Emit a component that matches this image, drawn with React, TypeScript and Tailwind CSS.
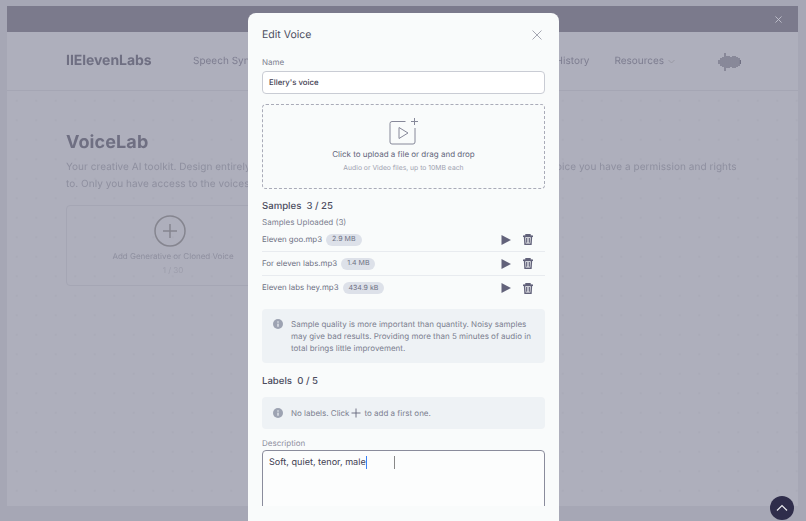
import React from "react";

function Info() {
  return (
    <svg width="10" height="10" viewBox="0 0 20 20" className="shrink-0">
      <circle cx="10" cy="10" r="10" fill="#9da3b2" />
      <rect x="8.8" y="9" width="2.4" height="6.5" rx="1" fill="#eef2f5" />
      <circle cx="10" cy="6" r="1.5" fill="#eef2f5" />
    </svg>
  );
}

function Play() {
  return (
    <svg width="10" height="10" viewBox="0 0 10 10">
      <path d="M.5 0 L10 5 L.5 10 Z" fill="#62627a" />
    </svg>
  );
}

function Trash() {
  return (
    <svg width="10" height="11" viewBox="0 0 20 22" fill="none" stroke="#62627a">
      <path d="M0 4.5 H20 M6 4 V1.5 H14 V4" strokeWidth="2.8" />
      <path d="M3 5 L4 20.5 H16 L17 5 Z" strokeWidth="2.8" />
      <path d="M7.5 8 V17.5 M12.5 8 V17.5" strokeWidth="2.6" />
    </svg>
  );
}

function SampleRow({ name, size, border }: { name: string; size: string; border?: boolean }) {
  return (
    <div className={`flex h-6 items-center ${border ? "border-b border-[#e8ebef]" : ""}`}>
      <span className="text-[7.9px] text-[#6d7083]">{name}</span>
      <span className="ml-[4px] flex h-[12px] items-center rounded-full bg-[#dde1e9] px-[6px] text-[7px] text-[#6d7083]">
        {size}
      </span>
      <span className="ml-auto flex items-center gap-[12px] pr-[12px]">
        <Play />
        <Trash />
      </span>
    </div>
  );
}

export default function App() {
  return (
    <div className="relative h-[521px] w-[806px] overflow-hidden bg-[#a6a7b5] font-['Inter',sans-serif] [text-rendering:geometricPrecision]">
      {/* page behind the dialog */}
      <div className="ml-[7px] mt-[6px] flex h-[500px] w-[791px] flex-col bg-[#aeafbc] blur-[0.35px]">
        <div className="flex h-[26px] items-center justify-end bg-[#7b7a8c] pr-[16px]">
          <svg width="7" height="7" viewBox="0 0 8 8" stroke="#c3c3cf" strokeWidth="1">
            <path d="M.5 .5 L7.5 7.5 M7.5 .5 L.5 7.5" />
          </svg>
        </div>
        <div className="flex h-[59px] items-center border-b border-[#a5a6b4] pl-[59px] pt-[1px]">
          <span className="mb-[3px] w-[127px] text-[14px] font-bold tracking-[-0.05px] text-[#6f6f82]">IIElevenLabs</span>
          <span className="text-[10px] text-[#7d7d90]">Speech Synthesis</span>
          <span className="ml-[278px] text-[10px] text-[#7d7d90]">History</span>
          <span className="ml-[25px] text-[10px] text-[#7d7d90]">Resources</span>
          <svg className="ml-[4px]" width="7" height="5" viewBox="0 0 7 5" fill="none" stroke="#96969f" strokeWidth="0.8">
            <path d="M.5 1 L3.5 4 L6.5 1" />
          </svg>
          <svg className="ml-[43px] blur-[0.5px]" width="23" height="20" viewBox="0 0 23 20" stroke="#6f6f82" strokeWidth="1.2">
            <path d="M1 8V12M3 6V14M5 5V15M7 1V19M9 4V16M11 4V16M13 5V15M15 4V16M17 4V16M19 5V15M21 6V14M22.5 8V12" />
          </svg>
        </div>
        <div className="flex-1 bg-[radial-gradient(#aaabb8_1px,transparent_1px)] bg-[size:19.5px_19.5px] px-[59px] pt-[39px]">
          <h1 className="text-[18px] font-bold leading-[26px] tracking-[0.1px] text-[#6f6f82]">VoiceLab</h1>
          <p className="mt-[3px] w-[675px] text-[10px] leading-[17px] tracking-[0.05px] text-[#8e8f9f]">
            Your creative AI toolkit. Design entirely new synthetic voices from scratch. Clone your own voice or a voice you have a permission and rights to. Only you have access to the voices you create.
          </p>
          <div className="mt-[12px] flex h-[81px] w-[214px] flex-col items-center rounded border border-[#a5a6b4] pt-[9px]">
            <svg className="mr-[6px]" width="32" height="32" viewBox="0 0 32 32" fill="none" stroke="#85858f" strokeWidth="1.5">
              <circle cx="16" cy="16" r="15" />
              <path d="M16 9V23M9 16H23" />
            </svg>
            <span className="mt-[3px] text-[8px] text-[#8e8f9f]">Add Generative or Cloned Voice</span>
            <span className="mt-[2px] text-[8px] text-[#9c9dab]">1 / 30</span>
          </div>
        </div>
      </div>

      {/* back-to-top button */}
      <div className="absolute left-[770px] top-[496px] flex h-6 w-6 items-center justify-center rounded-full bg-[#2f2d4b]">
        <svg width="12" height="8" viewBox="0 0 12 8" fill="none" stroke="#eeeef2" strokeWidth="1.2">
          <path d="M1 6.5 L6 1.5 L11 6.5" />
        </svg>
      </div>

      {/* dialog */}
      <div className="absolute left-[248px] top-[13px] h-[520px] w-[311px] rounded-t-lg bg-[#f9fbfb]">
        <div className="h-[493px] overflow-hidden px-[14px] pt-[15px]">
          <div className="flex h-[13px] items-center justify-between">
            <span className="text-[10.5px] text-[#4b4c5e]">Edit Voice</span>
            <svg className="mr-[3px]" width="10" height="10" viewBox="0 0 10 10" stroke="#8f92a0" strokeWidth="0.8">
              <path d="M.5 .5 L9.5 9.5 M9.5 .5 L.5 9.5" />
            </svg>
          </div>

          <div className="mt-[16px] text-[8px] leading-[11px] text-[#7b7e8f]">Name</div>
          <div className="mt-[3px] flex h-[23px] items-center rounded border border-[#c9ccd4] bg-white pl-[6px] text-[7.8px] font-medium text-[#3f4052]">
            Ellery's voice
          </div>

          <div className="mt-[10px] flex h-[85px] flex-col items-center rounded border border-dashed border-[#a9abb8] pt-[13px]">
            <svg width="30" height="28" viewBox="0 0 30 28" fill="none" stroke="#868899" strokeWidth="1">
              <path d="M16.5 3.5H3a2 2 0 0 0-2 2V24a2 2 0 0 0 2 2h21a2 2 0 0 0 2-2V10" />
              <path d="M10 9.5 L19 15 L10 20.5 Z" />
              <path d="M25.5 0V7M22 3.5H29" />
            </svg>
            <span className="mt-[3px] text-[8px] leading-[11px] text-[#62647a]">Click to upload a file or drag and drop</span>
            <span className="mt-[3px] text-[6.8px] leading-[9px] text-[#a0a2b0]">Audio or Video files, up to 10MB each</span>
          </div>

          <div className="mt-[11px] text-[9.6px] font-medium leading-[13px] text-[#4b4c5e]">
            Samples&nbsp; 3 / 25
          </div>
          <div className="mt-[4px] text-[8px] leading-[11px] text-[#7b7e8f]">Samples Uploaded (3)</div>
          <div>
            <SampleRow name="Eleven goo.mp3" size="2.9 MB" border />
            <SampleRow name="For eleven labs.mp3" size="1.4 MB" border />
            <SampleRow name="Eleven labs hey.mp3" size="434.9 kB" />
          </div>

          <div className="mt-[9px] flex h-[54px] gap-[8px] rounded bg-[#eef2f5] pl-[11px] pt-[9px]">
            <div className="pt-[1px]"><Info /></div>
            <p className="w-[245px] text-[8px] leading-[12px] text-[#7b7e8f]">
              Sample quality is more important than quantity. Noisy samples may give bad results. Providing more than 5 minutes of audio in total brings little improvement.
            </p>
          </div>

          <div className="mt-[12px] text-[9.6px] font-medium leading-[13px] text-[#4b4c5e]">
            Labels&nbsp; 0 / 5
          </div>

          <div className="mt-[9px] flex h-8 items-center rounded bg-[#eef2f5] pl-[11px] text-[8px] text-[#7b7e8f]">
            <Info />
            <span className="ml-[8px]">No labels. Click</span>
            <svg className="mx-[2px]" width="10" height="10" viewBox="0 0 10 10" stroke="#62647a" strokeWidth="0.9">
              <path d="M5 .5V9.5M.5 5H9.5" />
            </svg>
            <span className="ml-[1px]">to add a first one.</span>
          </div>

          <div className="mt-[9px] text-[8px] leading-[11px] text-[#8e909f]">Description</div>
          <div className="mt-[1px] h-[80px] rounded border border-[#8a8c9c] bg-[#fcfdfd] pl-[6px] pt-[5px]">
            <div className="flex items-center">
              <span className="border-r border-[#3b82f6] text-[9.1px] leading-[13px] text-[#3f4052]">Soft, quiet, tenor, male</span>
              <span className="ml-[27px] h-[13px] w-[1.5px] bg-[#888]" />
            </div>
          </div>
        </div>
      </div>
    </div>
  );
}
